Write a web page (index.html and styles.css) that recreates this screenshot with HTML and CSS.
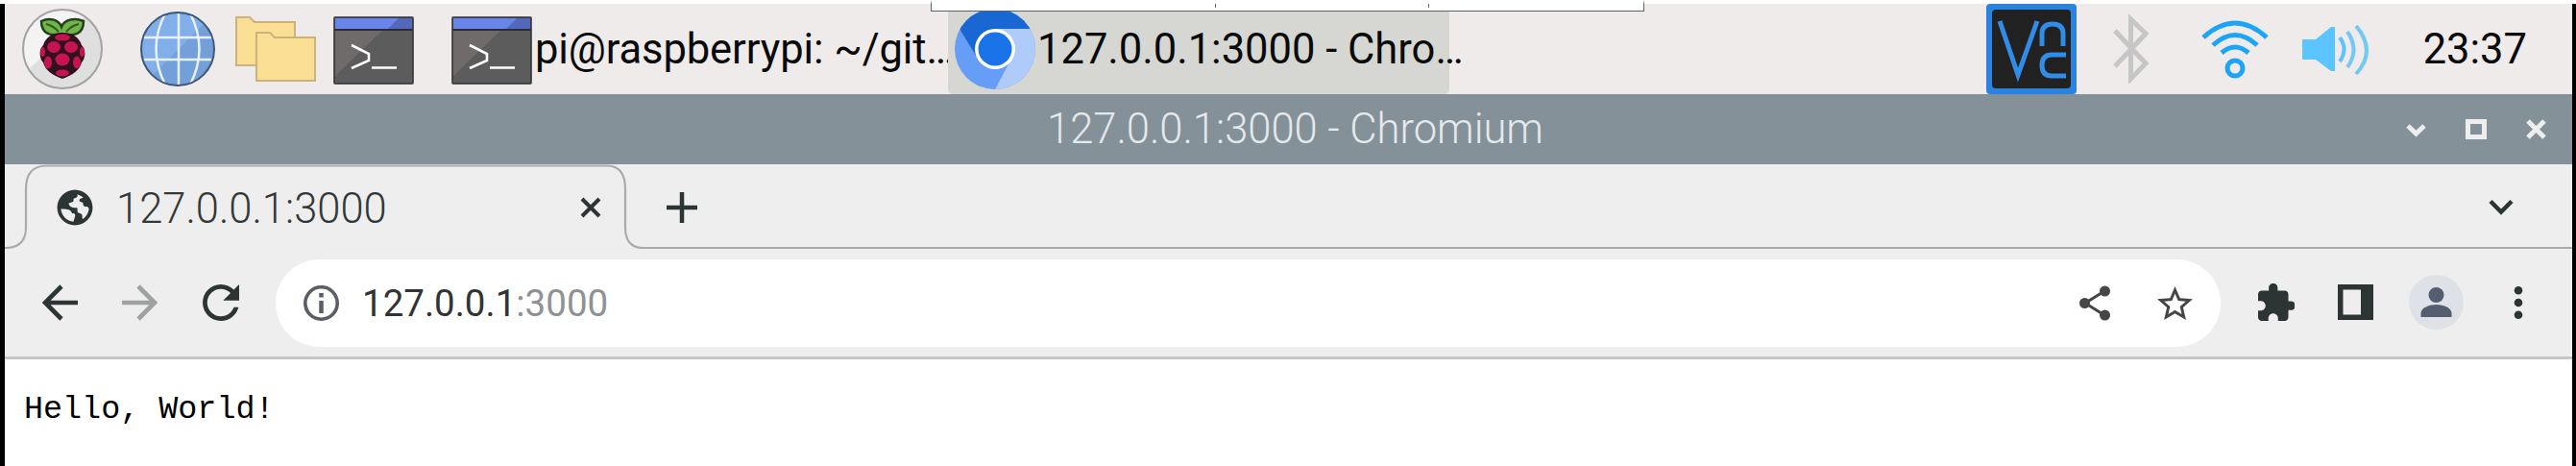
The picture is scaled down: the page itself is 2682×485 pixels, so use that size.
FILE: index.html
```html
<!DOCTYPE html>
<html lang="en">
<head>
<meta charset="utf-8">
<title>127.0.0.1:3000</title>
<link rel="stylesheet" href="styles.css">
</head>
<body>
<div class="popup-edge"><i></i><i></i></div>
<main class="screen">
  <header class="taskbar">
    <svg class="menu" width="84" height="84" viewBox="0 0 84 84">
      <defs><clipPath id="mc"><circle cx="42" cy="42" r="41"/></clipPath></defs>
      <circle cx="42" cy="42" r="41" fill="#f3f3f3"/>
      <path d="M0 70L74 0H84V84H0z" fill="#dedfde" clip-path="url(#mc)"/>
      <circle cx="42" cy="42" r="41" fill="none" stroke="#a2a2a2" stroke-width="2"/>
      <path d="M41 26C31 29 20 27 20 13c8-4 18-2 21 6 3-8 14-10 23-6 0 14-10 16-23 13z" fill="#6fb548" stroke="#26401c" stroke-width="2.5"/>
      <path d="M25 16q8 2 13 8M59 16q-8 2-13 8" stroke="#35572a" stroke-width="2" fill="none"/>
      <path d="M42 25c10 0 17 4 20 13 5 5 4 14 0 18-2 8-9 13-20 17-11-4-18-9-20-17-4-4-5-13 0-18 3-9 10-13 20-13z" fill="#32101e"/>
      <g fill="#c51450"><ellipse cx="42" cy="30" rx="8" ry="3.5"/><ellipse cx="33" cy="40" rx="7" ry="6"/><ellipse cx="51" cy="40" rx="7" ry="6"/><ellipse cx="42" cy="53" rx="7.5" ry="6.5"/><ellipse cx="27" cy="56" rx="4" ry="6.5"/><ellipse cx="57" cy="56" rx="4" ry="6.5"/><ellipse cx="42" cy="67" rx="7" ry="3.5"/><ellipse cx="21.500" cy="45" rx="2.500" ry="5"/><ellipse cx="62.500" cy="45" rx="2.500" ry="5"/></g>
    </svg>
    <svg class="web" width="78" height="78" viewBox="0 0 78 78">
      <defs><clipPath id="wc"><circle cx="39" cy="39" r="38"/></clipPath></defs>
      <g clip-path="url(#wc)"><path d="M0 0H78V78H0z" fill="#82aeea"/><path d="M13 66L66 13 78 0V78H0z" fill="#73a0d9"/>
      <g fill="none" stroke="#e8f0fb" stroke-width="2.500"><path d="M40 0V78M0 27H78M0 50H78M26 2Q7 39 26 76M52 2Q71 39 52 76"/></g></g>
      <circle cx="39" cy="39" r="38" fill="none" stroke="#3c5878" stroke-width="2"/>
    </svg>
    <svg class="files" width="84" height="69" viewBox="0 0 84 69">
      <g fill="#fade93" stroke="#ccb27c" stroke-width="2"><path d="M1 1H15l5 5H62V51H1z"/><path d="M22 17H36l5 5H83V67H22z"/></g>
    </svg>
    <svg class="term" width="84" height="71" viewBox="0 0 84 71">
      <rect x="1" y="1" width="82" height="69" rx="1" fill="#5c5c5c"/><path d="M2 14H52L2 62z" fill="#6e6b6a"/>
      <path d="M2 2H82V13H2z" fill="#6885eb"/><path d="M68 2H82V13H57z" fill="#5368ba"/><path d="M1 14H83" stroke="#2c2c33" stroke-width="2"/>
      <rect x="1" y="1" width="82" height="69" rx="1" fill="none" stroke="#333438" stroke-opacity=".8" stroke-width="2"/>
      <path d="M19 30L37 39v7L19 54M40 53.500H66" fill="none" stroke="#fff" stroke-width="2.600"/>
    </svg>
    <div class="task task-term">
      <svg width="84" height="71" viewBox="0 0 84 71">
        <rect x="1" y="1" width="82" height="69" rx="1" fill="#5c5c5c"/><path d="M2 14H52L2 62z" fill="#6e6b6a"/>
        <path d="M2 2H82V13H2z" fill="#6885eb"/><path d="M68 2H82V13H57z" fill="#5368ba"/><path d="M1 14H83" stroke="#2c2c33" stroke-width="2"/>
        <rect x="1" y="1" width="82" height="69" rx="1" fill="none" stroke="#333438" stroke-opacity=".8" stroke-width="2"/>
        <path d="M19 30L37 39v7L19 54M40 53.500H66" fill="none" stroke="#fff" stroke-width="2.600"/>
      </svg>
      <span class="label label-term">pi@raspberrypi: ~/git…</span>
    </div>
    <div class="task task-web">
      <svg width="84" height="84" viewBox="0 0 84 84">
        <defs><clipPath id="cc"><circle cx="42" cy="42" r="42"/></clipPath></defs>
        <g clip-path="url(#cc)"><path d="M0 0H84V84H0z" fill="#669df6"/><path d="M42 21H84V84H42L59 52z" fill="#aecbfa"/><path d="M5 21L0 0H84V21H42L24 52z" fill="#1967d2"/></g>
        <circle cx="42" cy="42" r="21" fill="#fff"/><circle cx="42" cy="42" r="17.500" fill="#1a73e8"/>
      </svg>
      <span class="label label-web">127.0.0.1:3000 - Chro…</span>
    </div>
    <div class="tray">
      <svg width="94" height="94" viewBox="0 0 94 94">
        <rect width="94" height="94" rx="4" fill="#2b83df"/><rect x="6" y="6" width="82" height="82" rx="4" fill="#212121"/>
        <g fill="none" stroke="#318ce7" stroke-width="5"><path d="M14 18L33 74 53 18M58 44V31Q58 21 69 21T80 31V44M83 53H68Q58 53 58 64T68 75H83"/></g>
      </svg>
      <svg class="bt" width="38" height="72" viewBox="0 0 38 72"><path d="M2 17L34 51 18.500 67V5L34 20 2 54" fill="none" stroke="#c6c6c6" stroke-width="5"/></svg>
      <svg class="wifi" width="70" height="62" viewBox="0 0 70 62"><g fill="none" stroke="#1ca5f7" stroke-width="5"><path d="M2 18Q35-12 68 18M12 26Q35 5 58 26M21 34Q35 22 49 34"/><ellipse cx="35" cy="50" rx="8" ry="8"/></g></svg>
      <svg class="vol" width="70" height="60" viewBox="0 0 70 60"><path d="M0 15H14L30 2H34V48H30L14 36H0z" fill="#5cc5ff"/><g fill="none" stroke-width="4"><path d="M39 13Q48 25 39 38" stroke="#5cc5ff"/><path d="M47 7Q60 26 47 44" stroke="#72c9f4"/><path d="M56 1Q78 27 56 51" stroke="#72c9f4"/></g></svg>
      <span class="clock">23:37</span>
    </div>
  </header>
  <section class="titlebar">
    <span class="title">127.0.0.1:3000 - Chromium</span>
    <svg class="winbtns" width="146" height="21" viewBox="0 0 146 21"><g fill="none" stroke="#eee" stroke-width="5"><path d="M2 7L10.500 15 19 7"/><path d="M64.500 2.500H81.500V18.500H64.500z"/><path d="M127 2L144 19M144 2L127 19" /></g></svg>
  </section>
  <nav class="tabstrip">
    <div class="tab">
      <svg class="tab-shape" width="665" height="88" viewBox="0 0 665 88"><path d="M0 87Q22 87 22 66V26Q22 1.500 43 1.500H627Q646 1.500 646 26V66Q646 87 665 87" fill="none" stroke="#aaa" stroke-width="2.200"/></svg>
      <div class="tab-content">
        <svg width="38" height="38" viewBox="1.700 1.700 20.600 20.600"><path fill="#2d3534" d="M12 2C6.480 2 2 6.480 2 12s4.480 10 10 10 10-4.480 10-10S17.520 2 12 2zM4.100 12.800c3.500-.1 5.400.2 6 1.900.4 1.100 1.700.3 2 1.300.3 1.200-.7 2.200-.9 4C7.500 19.600 4.500 16.800 4.100 12.800zM19.900 13c-.3 2.300-1.600 4.300-3.400 5.500-.8-.5 0-2-.7-2.700-.8-.8-2-.4-2.300-1.500-.4-1.300.7-2.200-1.200-2.200-2 .1-3.200-.6-3.700-1.900-.4-1.100 1.500-1 2.300-1.500.8-.5-.3-1.600 1-2 1.300-.3 1.800-.8 1.500-2.200 1.200.4 2.300 1 3.300 1.900-1.200.3-2.200.5-2.200 1.500 0 1.300 2.100.6 2.100 1.900 0 .9.4 1.500 1.200 1.700.8.200 1.900-.2 2.100 1.500z"/></svg>
        <span class="tab-title">127.0.0.1:3000</span>
        <svg class="close" width="22" height="22" viewBox="0 0 22 22"><path d="M2 2L20 20M20 2L2 20" stroke="#2d3534" stroke-width="4"/></svg>
      </div>
    </div>
    <div class="strip-rest">
      <svg width="32" height="32" viewBox="0 0 32 32"><path d="M16 0V32M0 16H32" stroke="#2d3534" stroke-width="4.500"/></svg>
      <svg class="chev" width="26" height="17" viewBox="0 0 26 17"><path d="M2 2.500L13 13.500 24 2.500" fill="none" stroke="#2d3534" stroke-width="4.500"/></svg>
    </div>
  </nav>
  <section class="toolbar">
    <svg class="back" width="37" height="38" viewBox="0 0 37 38"><path d="M37 19H4M20 2L3 19 20 36" fill="none" stroke="#2d3534" stroke-width="4.600"/></svg>
    <svg class="fwd" width="37" height="38" viewBox="0 0 37 38"><path d="M0 19H33M17 2L34 19 17 36" fill="none" stroke="#a0a1a1" stroke-width="4.600"/></svg>
    <svg class="reload" width="38" height="38" viewBox="4 4 16 16"><path fill="#2d3534" d="M17.650 6.350C16.200 4.900 14.210 4 12 4c-4.420 0-7.990 3.580-7.990 8s3.570 8 7.990 8c3.730 0 6.840-2.550 7.730-6h-2.080c-.82 2.330-3.040 4-5.650 4-3.310 0-6-2.690-6-6s2.690-6 6-6c1.660 0 3.140.69 4.220 1.780L13 11h7V4l-2.350 2.350z"/></svg>
    <div class="omnibox">
      <svg width="37" height="37" viewBox="0 0 37 37"><circle cx="18.500" cy="18.500" r="16.700" fill="none" stroke="#5b5e64" stroke-width="3.600"/><path d="M18.500 8V12.500M18.500 16V29" stroke="#5b5e64" stroke-width="4.500"/></svg>
      <span class="url">127.0.0.1<span>:3000</span></span>
      <svg class="share" width="32" height="37" viewBox="0 0 32 37"><path d="M26 6L6 18.500 26 31" fill="none" stroke="#444746" stroke-width="3"/><g fill="#444746"><circle cx="26.500" cy="6" r="5.500"/><circle cx="5.500" cy="18.500" r="5.500"/><circle cx="26.500" cy="31" r="5.500"/></g></svg>
      <svg class="star" width="37" height="37" viewBox="2 2 20 19"><path fill="#444746" d="M22 9.240l-7.190-.62L12 2 9.190 8.630 2 9.240l5.460 4.730L5.820 21 12 17.270 18.180 21l-1.630-7.030L22 9.240zM12 15.400l-3.760 2.270 1-4.280-3.320-2.880 4.380-.38L12 6.100l1.710 4.040 4.380.38-3.320 2.880 1 4.280L12 15.400z"/></svg>
    </div>
    <svg class="ext" width="38" height="39" viewBox="2 1 20.500 21"><path fill="#2d3534" d="M20.500 11H19V7c0-1.100-.9-2-2-2h-4V3.500C13 2.120 11.880 1 10.500 1S8 2.120 8 3.500V5H4c-1.100 0-1.990.9-1.990 2v3.800H3.500c1.490 0 2.700 1.210 2.700 2.700s-1.210 2.700-2.700 2.700H2V20c0 1.100.9 2 2 2h3.800v-1.500c0-1.490 1.210-2.700 2.700-2.700 1.490 0 2.700 1.210 2.700 2.700V22H17c1.100 0 2-.9 2-2v-4h1.500c1.380 0 2.500-1.120 2.500-2.500S21.880 11 20.500 11z"/></svg>
    <svg class="side" width="37" height="37" viewBox="0 0 37 37"><path fill-rule="evenodd" d="M0 0H37V37H0zM5.500 5.500V31.500H24V5.500z" fill="#2d3534"/></svg>
    <svg class="avatar" width="57" height="57" viewBox="0 0 57 57"><circle cx="28.500" cy="28.500" r="28.500" fill="#dee1e6"/><g fill="#555e70"><circle cx="28.500" cy="21" r="8"/><path d="M12.500 44V40C12.500 34 22 31 28.500 31S44.500 34 44.500 40V44z"/></g></svg>
    <svg class="dots" width="10" height="34" viewBox="0 0 10 34"><g fill="#2d3534"><circle cx="5" cy="4.300" r="4.300"/><circle cx="5" cy="17" r="4.300"/><circle cx="5" cy="29.700" r="4.300"/></g></svg>
  </section>
  <article class="page"><pre>Hello, World!</pre></article>
</main>
</body>
</html>
```

FILE: styles.css
```css
* { box-sizing: border-box; }
body { margin: 0; padding-top: 4px; background: #fff; font-family: Roboto, "Noto Sans", sans-serif; overflow: hidden; }
svg { display: block; flex: none; }
span { white-space: nowrap; }
.screen { height: 481px; border-left: 5px solid #000; border-right: 4px solid #000; display: flex; flex-direction: column; }
.popup-edge { position: absolute; left: 969px; top: 0; width: 743px; height: 12px; background: #fff; border: 1px solid #5c6165; border-top: 4px solid #fff; display: flex; padding-left: 295px; gap: 221px; }
.popup-edge i { width: 1px; height: 4px; background: #666; }

.taskbar { height: 94px; flex: none; background: #eeebea; display: flex; align-items: flex-start; font-size: 43.500px; line-height: 52px; color: #0a0a0a; }
.menu { margin: 5px 0 0 18px; }
.web { margin: 8px 0 0 39px; }
.files { margin: 13px 0 0 21px; }
.term { margin: 13px 0 0 18px; }
.task { display: flex; height: 94px; align-items: flex-start; }
.task-term { margin-left: 39px; width: 517px; padding-top: 13px; }
.label-term { margin-left: 3px; padding-top: 9px; letter-spacing: -.1px; }
.task-web { width: 522px; padding: 5px 0 0 7px; background: #d6d7d2; border-radius: 0 0 5px 5px; }
.label-web { margin-left: 2px; padding-top: 17px; }
.tray { margin-left: auto; display: flex; align-items: flex-start; padding-right: 47px; }
.bt { margin: 11px 0 0 38px; }
.wifi { margin: 17px 0 0 54px; }
.vol { margin: 22px 0 0 35px; }
.clock { margin: 22px 0 0 56px; }

.titlebar { height: 73px; flex: none; background: #849199; display: flex; color: #e6e9eb; font-size: 43.500px; font-weight: 300; line-height: 52px; }
.title { margin: 11px 0 0 1085px; }
.winbtns { margin: 26px 27px 0 auto; }

.tabstrip { height: 88px; flex: none; display: flex; background: #eee; }
.tab { display: grid; }
.tab > * { grid-area: 1 / 1; }
.tab-content { display: flex; align-items: flex-start; padding-left: 54px; padding-top: 26px; }
.tab-title { margin: -5px 0 0 24px; font-size: 43.500px; line-height: 52px; font-weight: 300; color: #333938; }
.close { margin: 8px 44px 0 auto; }
.strip-rest { flex: 1; display: flex; align-items: flex-start; justify-content: space-between; border-bottom: 2px solid #aaa; padding: 29px 61px 0 24px; }
.chev { margin-top: 7px; }

.toolbar { height: 115px; flex: none; display: flex; align-items: center; background: #eee; border-bottom: 3px solid #c6c6c6; }
.toolbar > svg { margin-bottom: 1px; }
.toolbar .back { margin-left: 39px; }
.toolbar .fwd { margin-left: 46px; }
.toolbar .reload { margin-left: 47px; }
.omnibox { margin-left: 38px; width: 2025px; height: 91px; border-radius: 46px; background: #fff; display: flex; align-items: center; padding: 0 29px; }
.url { margin-left: 24px; font-size: 38.500px; font-weight: 400; color: #303436; }
.url span { color: #8e9296; }
.share { margin-left: auto; }
.star { margin-left: 49px; }
.ext { margin-left: 39px; }
.side { margin-left: 45px; }
.avatar { margin-left: 37px; }
.dots { margin-left: 52px; }

.page { flex: 1; background: #fff; padding: 32px 20px; }
.page pre { margin: 0; font: 33.400px/40px "Liberation Mono", monospace; color: #000; }
```
